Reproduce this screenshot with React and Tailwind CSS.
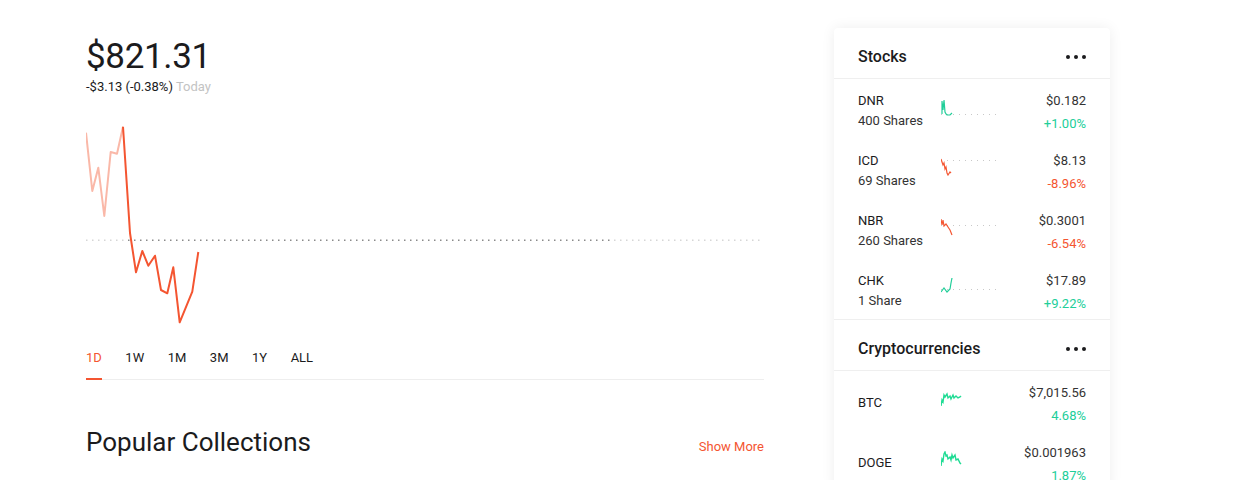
import React from "react";

const RED = "#f45531";
const GREEN = "#21ce99";

const stocks = [
  { sym: "DNR", shares: "400 Shares", price: "$0.182", pct: "+1.00%", up: true, dot: 16, pts: "1,16 1,3 2,12 3,2 4,14 5,16 6,17 9,17 11,15" },
  { sym: "ICD", shares: "69 Shares", price: "$8.13", pct: "-8.96%", up: false, dot: 2, pts: "0,1 2,7 3,5 4,11 5,9 6,15 7,17 9,14 10,15" },
  { sym: "NBR", shares: "260 Shares", price: "$0.3001", pct: "-6.54%", up: false, dot: 7, pts: "0,1 1,7 2,2 3,8 5,6 7,9 9,12 11,17" },
  { sym: "CHK", shares: "1 Share", price: "$17.89", pct: "+9.22%", up: true, dot: 11, pts: "0,14 3,10 6,14 9,11 10,5 11,0" },
];

const crypto = [
  { sym: "BTC", price: "$7,015.56", pct: "4.68%", pts: "0,15 1,9 2,11 3,4 4,6 6,3 7,7 9,5 10,8 12,4 13,7 15,5 17,7 19,6 20,5" },
  { sym: "DOGE", price: "$0.001963", pct: "1.87%", pts: "0,15 1,8 2,10 3,3 4,1 5,5 6,4 7,8 9,6 10,9 11,4 12,7 14,4 15,9 17,8 19,12 20,13" },
];

const lightPts = "0,12.7 6.3,71 12.3,47.7 18.3,96 24.7,32 31,33.7 37,6.7";
const redPts =
  "37,6.7 44,113 50,152.3 56.3,131 62.3,145.7 69,135.7 75,170 81.3,173.3 87.3,147.3 93.7,202.3 106.3,171.7 112.3,132";

function Dots() {
  return (
    <div className="flex gap-[4px]">
      <span className="w-[4px] h-[4px] rounded-full bg-[#1b1b1d]" />
      <span className="w-[4px] h-[4px] rounded-full bg-[#1b1b1d]" />
      <span className="w-[4px] h-[4px] rounded-full bg-[#1b1b1d]" />
    </div>
  );
}

function Chart() {
  const dots = [];
  for (let x = 0; x < 678; x += 6) {
    dots.push(
      <rect key={x} x={x} y={119.5} width={1.5} height={1.5} fill={x >= 37 && x < 527 ? "#8a8a8a" : "#d6d6d6"} />
    );
  }
  return (
    <svg width="678" height="210" className="block mt-[25px]">
      {dots}
      <polyline points={lightPts} fill="none" stroke="#fab8a8" strokeWidth="2" strokeLinejoin="round" />
      <polyline points={redPts} fill="none" stroke={RED} strokeWidth="2" strokeLinejoin="round" />
    </svg>
  );
}

function StockRow({ s }) {
  const color = s.up ? GREEN : RED;
  const dots = [];
  for (let x = 0; x < 58; x += 6) {
    dots.push(<rect key={x} x={x} y={s.dot} width={1} height={1} fill="#c8c8c8" />);
  }
  return (
    <div className="h-[60px] px-6 flex">
      <div className="w-[83px] pt-[12px]">
        <div className="text-[13px] leading-5 text-[#1b1b1d]">{s.sym}</div>
        <div className="text-[13px] leading-5 text-[#333]">{s.shares}</div>
      </div>
      <svg width="58" height="18" className="mt-[19px] shrink-0">
        {dots}
        <polyline points={s.pts} fill="none" stroke={color} strokeWidth="1.2" />
      </svg>
      <div className="flex-1 text-right pt-[12px]">
        <div className="text-[13px] leading-5 text-[#333]">{s.price}</div>
        <div className="text-[13px] leading-5 mt-[3px]" style={{ color }}>{s.pct}</div>
      </div>
    </div>
  );
}

function CryptoRow({ c }) {
  return (
    <div className="h-[60px] px-6 flex">
      <div className="w-[83px] flex items-center pt-[4px]">
        <div className="text-[13px] leading-5 text-[#1b1b1d]">{c.sym}</div>
      </div>
      <svg width="21" height="17" className="mt-[20px] shrink-0">
        <polyline points={c.pts} fill="none" stroke="#1fdc94" strokeWidth="1.4" />
      </svg>
      <div className="flex-1 text-right pt-[12px]">
        <div className="text-[13px] leading-5 text-[#333]">{c.price}</div>
        <div className="text-[13px] leading-5 mt-[3px] text-[#21ce99]">{c.pct}</div>
      </div>
    </div>
  );
}

function Header({ title }) {
  return (
    <div className="h-[51px] px-6 pt-[7px] flex items-center justify-between border-b border-[#efefef]">
      <span className="text-[16px] font-medium text-[#1b1b1d]">{title}</span>
      <Dots />
    </div>
  );
}

export default function App() {
  return (
    <div
      className="w-[1240px] h-[480px] overflow-hidden bg-white flex pl-[86px]"
      style={{ fontFamily: "Roboto, 'Liberation Sans', sans-serif" }}
    >
      <div className="w-[678px] pt-[36px]">
        <div className="text-[35px] leading-[42px] text-[#1b1b1d] tracking-[-0.01em]">$821.31</div>
        <div className="text-[13px] leading-4 mt-[1px]">
          <span className="text-[#1b1b1d]">-$3.13 (-0.38%)</span>{" "}
          <span className="text-[#c3c3c3]">Today</span>
        </div>
        <Chart />
        <div className="mt-[17px] flex gap-[23.5px] border-b border-[#eeeeee]">
          {["1D", "1W", "1M", "3M", "1Y", "ALL"].map((t, i) => (
            <div
              key={t}
              className={
                "text-[13px] leading-5 pt-px pb-[10px] -mb-px border-b-2 " +
                (i === 0 ? "text-[#f45531] border-[#f45531]" : "text-[#1b1b1d] border-transparent")
              }
            >
              {t}
            </div>
          ))}
        </div>
        <div className="mt-[46px] flex items-baseline justify-between">
          <h2 className="text-[26px] leading-8 text-[#1b1b1d]">Popular Collections</h2>
          <span className="text-[13px] text-[#f45531]">Show More</span>
        </div>
      </div>
      <div className="ml-[70px] mt-[28px] w-[276px] self-start bg-white rounded-[4px] shadow-[0_0_14px_rgba(0,0,0,0.07)]">
        <Header title="Stocks" />
        {stocks.map((s) => (
          <StockRow key={s.sym} s={s} />
        ))}
        <div className="border-t border-[#efefef]">
          <Header title="Cryptocurrencies" />
          {crypto.map((c) => (
            <CryptoRow key={c.sym} c={c} />
          ))}
        </div>
      </div>
    </div>
  );
}
